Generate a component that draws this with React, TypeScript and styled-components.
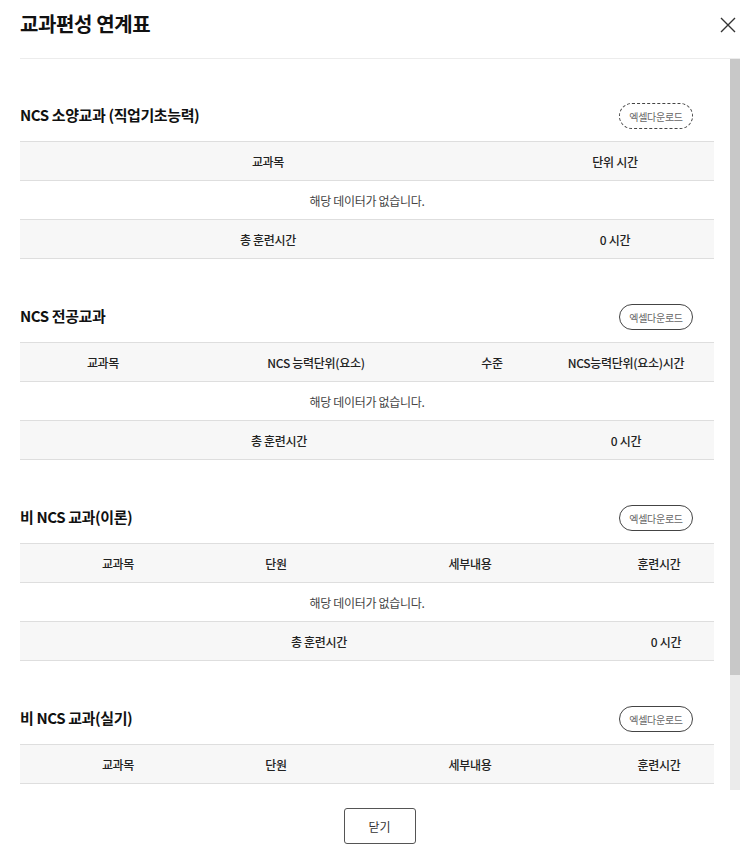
import styled, { createGlobalStyle } from 'styled-components';

const GlobalStyle = createGlobalStyle`
  html, body {
    margin: 0;
    padding: 0;
    background: #fff;
  }
  body {
    font-family: "Noto Sans CJK KR", "Noto Sans", sans-serif;
    color: #222;
  }
`;

const Modal = styled.div`
  width: 755px;
  height: 848px;
  display: flex;
  flex-direction: column;
  background: #fff;
`;

const Header = styled.header`
  height: 58px;
  box-sizing: border-box;
  padding: 11px 18px 0 20px;
  display: flex;
  justify-content: space-between;
  align-items: flex-start;
`;

const Title = styled.h1`
  margin: 0;
  font-size: 20px;
  line-height: 26px;
  font-weight: 700;
  letter-spacing: -0.4px;
  color: #111;
`;

const CloseButton = styled.button`
  width: 18px;
  height: 18px;
  margin-top: 5px;
  padding: 0;
  border: 0;
  background: none;
  display: flex;
  align-items: center;
  justify-content: center;
`;

const Body = styled.div`
  margin-left: 20px;
  width: 720px;
  height: 732px;
  box-sizing: border-box;
  border-top: 1px solid #ececec;
  display: flex;
`;

const ScrollContent = styled.div`
  flex: 1;
  overflow: hidden;
  padding: 44px 16px 0 0;
`;

const ScrollTrack = styled.div`
  width: 10px;
  background: #ebebeb;
  display: flex;
  flex-direction: column;
`;

const ScrollThumb = styled.div`
  background: #c8c8c8;
`;

const Section = styled.section`
  & + & {
    margin-top: 45px;
  }
`;

const SectionHead = styled.div`
  display: flex;
  align-items: center;
  justify-content: space-between;
  padding-right: 21px;
  margin-bottom: 12px;
`;

const SectionTitle = styled.h2`
  margin: 0 0 3px;
  font-size: 15px;
  line-height: 20px;
  font-weight: 700;
  letter-spacing: -0.4px;
  color: #111;
`;

const ExcelButton = styled.button<{ $focused?: boolean }>`
  height: 26px;
  width: 74px;
  padding: 0;
  border: 1px ${(p) => (p.$focused ? 'dashed' : 'solid')} #444;
  border-radius: 13px;
  background: #fff;
  font-family: inherit;
  font-size: 10px;
  letter-spacing: -0.3px;
  color: #666;
`;

const Table = styled.div`
  border-top: 1px solid #dedede;
`;

const Row = styled.div<{ $cols: string; $shade?: boolean }>`
  display: grid;
  grid-template-columns: ${(p) => p.$cols};
  height: 38px;
  align-items: center;
  border-bottom: 1px solid #dedede;
  background: ${(p) => (p.$shade ? '#f7f7f7' : '#fff')};
`;

const Cell = styled.div<{ $strong?: boolean }>`
  text-align: center;
  font-size: 12px;
  letter-spacing: -0.3px;
  font-weight: ${(p) => (p.$strong ? 500 : 400)};
  color: ${(p) => (p.$strong ? '#222' : '#444')};
`;

const Footer = styled.footer`
  flex: 1;
  display: flex;
  justify-content: center;
  padding: 18px 0 0 4px;
`;

const CloseAction = styled.button`
  width: 72px;
  height: 36px;
  border: 1px solid #555;
  border-radius: 3px;
  background: #fff;
  font-family: inherit;
  font-size: 12px;
  color: #333;
`;

type Spec = {
  title: string;
  head: string[];
  headCols: string;
  totalCols: string;
  focused?: boolean;
};

const sections: Spec[] = [
  {
    title: 'NCS 소양교과 (직업기초능력)',
    head: ['교과목', '단위 시간'],
    headCols: '496px 1fr',
    totalCols: '496px 1fr',
    focused: true,
  },
  {
    title: 'NCS 전공교과',
    head: ['교과목', 'NCS 능력단위(요소)', '수준', 'NCS능력단위(요소)시간'],
    headCols: '166px 260px 92px 1fr',
    totalCols: '518px 1fr',
  },
  {
    title: '비 NCS 교과(이론)',
    head: ['교과목', '단원', '세부내용', '훈련시간'],
    headCols: '196px 120px 268px 1fr',
    totalCols: '598px 1fr',
  },
  {
    title: '비 NCS 교과(실기)',
    head: ['교과목', '단원', '세부내용', '훈련시간'],
    headCols: '196px 120px 268px 1fr',
    totalCols: '598px 1fr',
  },
];

// viewport 731px of roughly 867px of content
const thumbHeight = Math.round((731 * 731) / 867);

function CloseIcon() {
  return (
    <svg width="16" height="16" viewBox="0 0 16 16" fill="none">
      <path d="M1 1L15 15M15 1L1 15" stroke="#333" strokeWidth="1.4" />
    </svg>
  );
}

export default function App() {
  return (
    <Modal>
      <GlobalStyle />
      <Header>
        <Title>교과편성 연계표</Title>
        <CloseButton aria-label="닫기">
          <CloseIcon />
        </CloseButton>
      </Header>
      <Body>
        <ScrollContent>
          {sections.map((s, i) => (
            <Section key={s.title}>
              <SectionHead>
                <SectionTitle>{s.title}</SectionTitle>
                <ExcelButton $focused={s.focused}>엑셀다운로드</ExcelButton>
              </SectionHead>
              <Table>
                <Row $cols={s.headCols} $shade>
                  {s.head.map((h) => (
                    <Cell key={h} $strong>
                      {h}
                    </Cell>
                  ))}
                </Row>
                {i < sections.length - 1 && (
                  <>
                    <Row $cols="1fr">
                      <Cell>해당 데이터가 없습니다.</Cell>
                    </Row>
                    <Row $cols={s.totalCols} $shade>
                      <Cell $strong>총 훈련시간</Cell>
                      <Cell $strong>0 시간</Cell>
                    </Row>
                  </>
                )}
              </Table>
            </Section>
          ))}
        </ScrollContent>
        <ScrollTrack>
          <ScrollThumb style={{ height: thumbHeight }} />
        </ScrollTrack>
      </Body>
      <Footer>
        <CloseAction>닫기</CloseAction>
      </Footer>
    </Modal>
  );
}
